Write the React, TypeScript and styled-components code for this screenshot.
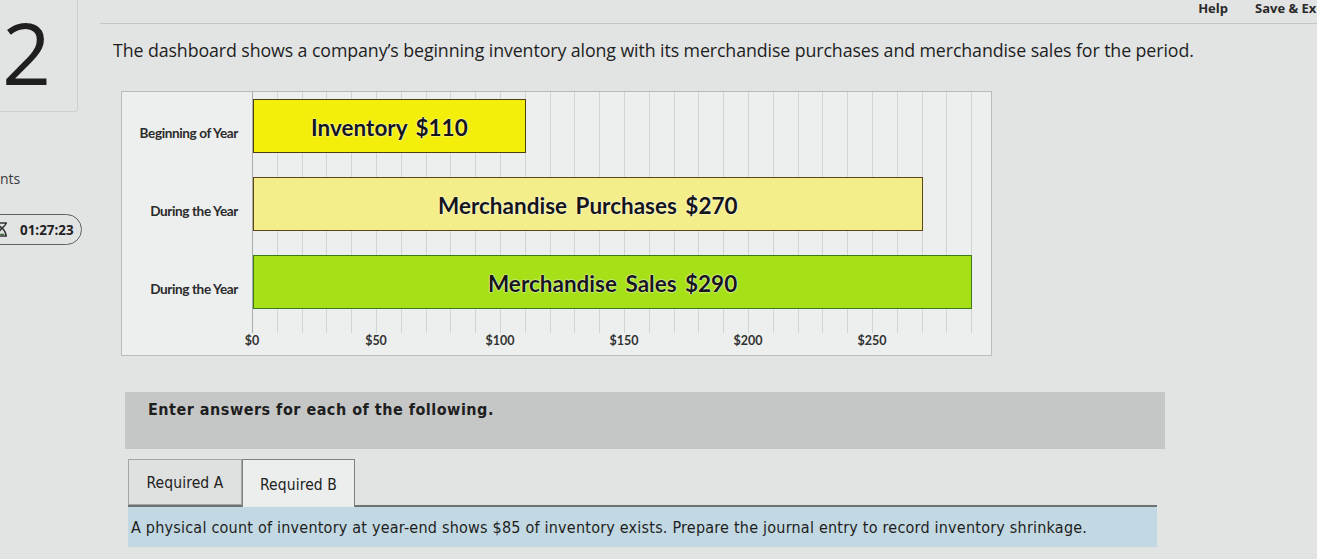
import React from 'react';
import styled, { createGlobalStyle } from 'styled-components';

const SCALE = 2.48; // px per dollar on the chart

const GlobalStyle = createGlobalStyle`
  html, body {
    margin: 0;
    padding: 0;
    background: #e2e4e4;
    font-family: 'Liberation Sans', Arial, sans-serif;
    color: #222;
  }
  * { box-sizing: border-box; }
`;

const Page = styled.div`
  display: flex;
  width: 1317px;
  height: 559px;
  overflow: hidden;
`;

const Sidebar = styled.aside`
  width: 100px;
  flex-shrink: 0;
  display: flex;
  flex-direction: column;
`;

const NumberBox = styled.div`
  width: 78px;
  height: 112px;
  border-right: 1px solid #cdd0d0;
  border-bottom: 1px solid #cdd0d0;
  border-bottom-right-radius: 3px;
  display: flex;
  align-items: center;
  font-family: 'Open Sans', sans-serif;
  font-weight: 400;
  font-size: 86px;
  line-height: 1;
  color: #1f1f1f;
  padding-left: 2px;
  padding-bottom: 8px;
`;

const PointsText = styled.div`
  margin-top: 57px;
  font-family: 'Open Sans', sans-serif;
  font-size: 14px;
  color: #3a3a3a;
`;

const TimerPill = styled.div`
  margin-top: 26px;
  margin-left: -18px;
  width: 100px;
  height: 31px;
  border: 1.5px solid #5e6262;
  border-radius: 16px;
  display: flex;
  align-items: center;
  gap: 12px;
  padding-left: 13px;
  font-family: 'Open Sans', sans-serif;
  font-weight: 700;
  font-size: 13.4px;
  color: #222;
`;

const Main = styled.main`
  flex: 1;
  display: flex;
  flex-direction: column;
`;

const TopBar = styled.header`
  height: 24px;
  padding-top: 1px;
  border-bottom: 1px solid #c4c7c7;
  display: flex;
  justify-content: flex-end;
  align-items: flex-start;
  gap: 27px;
  margin-right: -9px;
`;

const TopLink = styled.span`
  font-family: 'Open Sans', sans-serif;
  font-weight: 700;
  font-size: 13px;
  line-height: 14px;
  color: #2a2a2a;
`;

const Question = styled.p`
  margin: 15px 0 0 13px;
  font-family: 'Open Sans', sans-serif;
  font-size: 17.8px;
  line-height: 22px;
  color: #1e1e1e;
  letter-spacing: -0.1px;
`;

const Content = styled.div`
  padding-left: 21px;
  display: flex;
  flex-direction: column;
`;

const ChartPanel = styled.section`
  margin-top: 30px;
  width: 871px;
  height: 265px;
  background: #edefef;
  border: 1px solid #b9bcbc;
  display: flex;
  flex-direction: column;
`;

const ChartBody = styled.div`
  display: flex;
`;

const LabelColumn = styled.div`
  width: 130px;
  padding-top: 7px;
  display: flex;
  flex-direction: column;
`;

const RowLabel = styled.div`
  height: 78px;
  display: flex;
  align-items: center;
  justify-content: flex-end;
  padding: 0 14px 10px 0;
  font-family: Lato, 'Liberation Sans', sans-serif;
  font-weight: 700;
  font-size: 13.6px;
  letter-spacing: -0.4px;
  color: #2b2b2b;
`;

const Plot = styled.div`
  flex: 1;
  margin-right: 12px;
  padding: 7px 0 20px;
  display: flex;
  flex-direction: column;
  gap: 24px;
  border-left: 1px solid #a9acac;
  background-image: repeating-linear-gradient(
    to right,
    transparent 0,
    transparent ${SCALE * 10 - 1}px,
    #d2d5d5 ${SCALE * 10 - 1}px,
    #d2d5d5 ${SCALE * 10}px
  );
`;

const barColors = {
  inventory: { bg: '#f3ef0a', border: '#4d3f12' },
  purchases: { bg: '#f4ee8a', border: '#5e4418' },
  sales: { bg: '#a6e016', border: '#3e7a1c' },
};

type BarKind = keyof typeof barColors;

const Bar = styled.div<{ $kind: BarKind }>`
  height: 54px;
  background: ${({ $kind }) => barColors[$kind].bg};
  border: 1.5px solid ${({ $kind }) => barColors[$kind].border};
  display: flex;
  align-items: center;
  justify-content: center;
  padding-top: 3px;
  font-family: Lato, 'Liberation Sans', sans-serif;
  font-weight: 700;
  font-size: 22.5px;
  color: #161616;
  text-shadow: 0 0 2px #fff, 0 0 1px #fff;
  word-spacing: 3px;
  white-space: nowrap;
`;

const AxisRow = styled.div`
  display: flex;
  padding-left: ${130 - SCALE * 25}px;
`;

const AxisLabel = styled.span`
  width: ${SCALE * 50}px;
  text-align: center;
  font-family: Lato, 'Liberation Sans', sans-serif;
  font-weight: 700;
  font-size: 12.5px;
  color: #333;
`;

const InstructionBar = styled.div`
  margin-top: 36px;
  margin-left: 4px;
  width: 1040px;
  height: 57px;
  background: #c5c7c7;
  padding: 8px 0 0 23px;
  font-family: 'DejaVu Sans Condensed', 'Liberation Sans', sans-serif;
  font-weight: 700;
  font-size: 16px;
  letter-spacing: 0.5px;
  color: #1e1e1e;
`;

const TabRow = styled.div`
  margin-top: 10px;
  margin-left: 7px;
  width: 1029px;
  display: flex;
  align-items: flex-end;
  border-bottom: 2px solid #6c7171;
`;

const Tab = styled.div<{ $active?: boolean }>`
  width: ${({ $active }) => ($active ? 113 : 114)}px;
  height: ${({ $active }) => ($active ? 48 : 46)}px;
  display: flex;
  align-items: center;
  justify-content: center;
  padding-top: 2px;
  border: 1px solid ${({ $active }) => ($active ? '#7e8282' : '#a3a6a6')};
  border-bottom: ${({ $active }) => ($active ? 'none' : '1px solid #a3a6a6')};
  background: ${({ $active }) => ($active ? '#eceeee' : '#dfe1e1')};
  margin-bottom: ${({ $active }) => ($active ? '-2px' : '0')};
  font-family: 'DejaVu Sans Condensed', 'Liberation Sans', sans-serif;
  font-size: 15.5px;
  letter-spacing: 0.1px;
  color: #222;
`;

const PromptStrip = styled.div`
  margin-left: 7px;
  width: 1029px;
  height: 40px;
  background: #c2d8e2;
  display: flex;
  align-items: center;
  padding-left: 3px;
  font-family: 'DejaVu Sans Condensed', 'Liberation Sans', sans-serif;
  font-size: 16px;
  letter-spacing: 0.22px;
  white-space: nowrap;
  color: #1e1e1e;
`;

const bars: { kind: BarKind; label: string; row: string; value: number }[] = [
  { kind: 'inventory', label: 'Inventory $110', row: 'Beginning of Year', value: 110 },
  { kind: 'purchases', label: 'Merchandise Purchases $270', row: 'During the Year', value: 270 },
  { kind: 'sales', label: 'Merchandise Sales $290', row: 'During the Year', value: 290 },
];

const ticks = [0, 50, 100, 150, 200, 250];

const Hourglass = () => (
  <svg width="12" height="15" viewBox="0 0 12 15" fill="none">
    <path d="M1 1h10M1 14h10M2 1c0 4.5 8 4.5 8 13M10 1c0 4.5-8 4.5-8 13" stroke="#333" strokeWidth="1.6" />
    <path d="M3.5 13c0-2 5-2 5 0z" fill="#3f7a3a" />
  </svg>
);

export default function App() {
  return (
    <Page>
      <GlobalStyle />
      <Sidebar>
        <NumberBox>2</NumberBox>
        <PointsText>nts</PointsText>
        <TimerPill>
          <Hourglass />
          01:27:23
        </TimerPill>
      </Sidebar>
      <Main>
        <TopBar>
          <TopLink>Help</TopLink>
          <TopLink>Save &amp; Exit</TopLink>
        </TopBar>
        <Question>
          The dashboard shows a company’s beginning inventory along with its merchandise purchases and
          merchandise sales for the period.
        </Question>
        <Content>
          <ChartPanel>
            <ChartBody>
              <LabelColumn>
                {bars.map((b, i) => (
                  <RowLabel key={i}>{b.row}</RowLabel>
                ))}
              </LabelColumn>
              <Plot>
                {bars.map((b) => (
                  <Bar key={b.kind} $kind={b.kind} style={{ width: b.value * SCALE }}>
                    {b.label}
                  </Bar>
                ))}
              </Plot>
            </ChartBody>
            <AxisRow>
              {ticks.map((t) => (
                <AxisLabel key={t}>${t}</AxisLabel>
              ))}
            </AxisRow>
          </ChartPanel>
          <InstructionBar>Enter answers for each of the following.</InstructionBar>
          <TabRow>
            <Tab>Required A</Tab>
            <Tab $active>Required B</Tab>
          </TabRow>
          <PromptStrip>
            A physical count of inventory at year-end shows $85 of inventory exists. Prepare the journal
            entry to record inventory shrinkage.
          </PromptStrip>
        </Content>
      </Main>
    </Page>
  );
}
